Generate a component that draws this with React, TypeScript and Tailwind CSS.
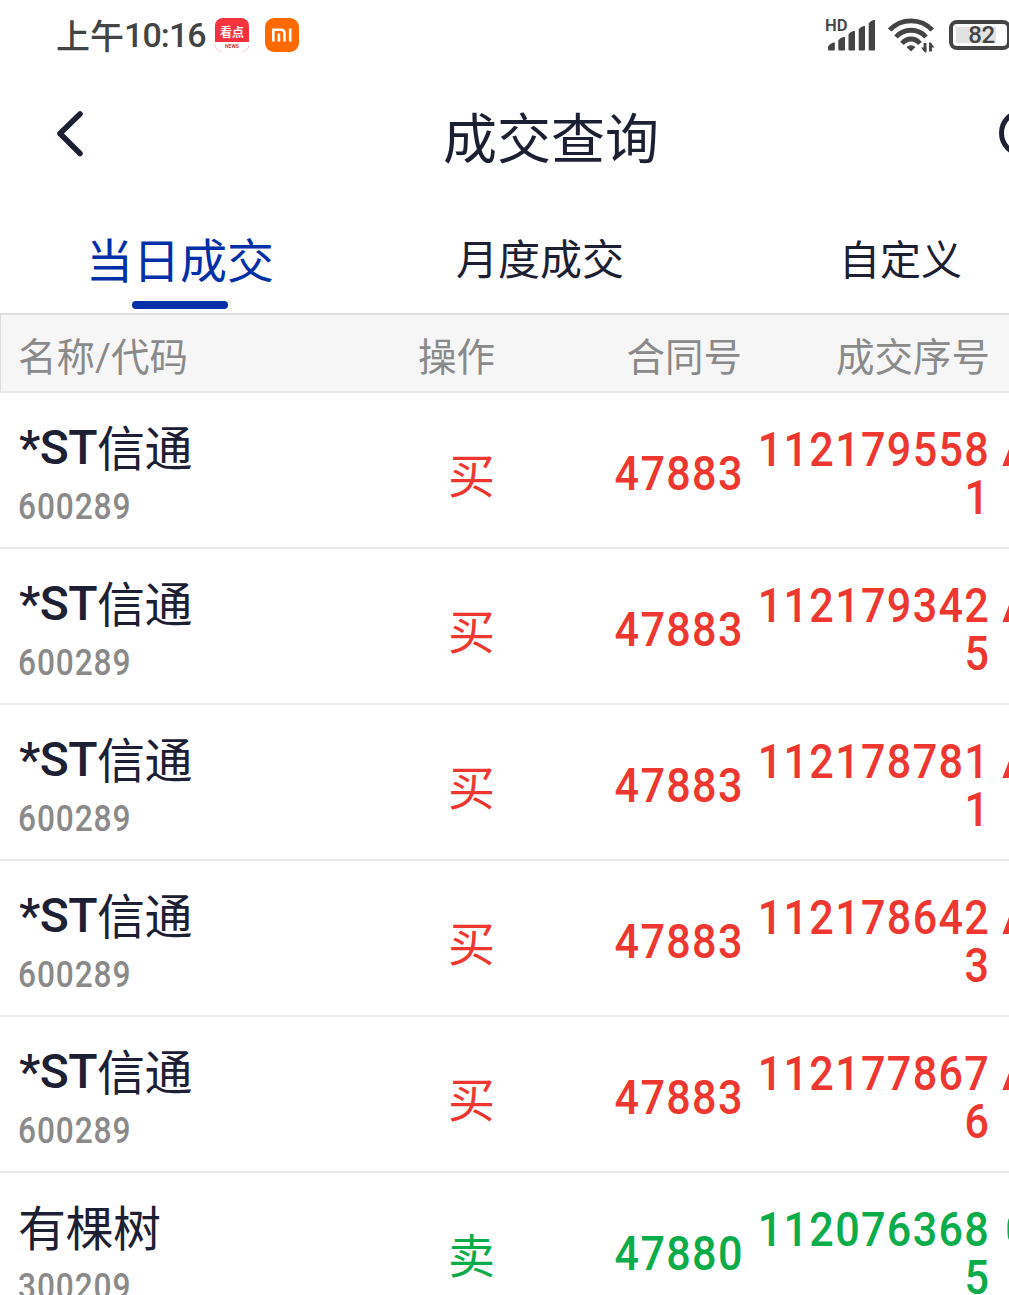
type Trade = {
  name: string;
  latin?: string;
  code: string;
  side: "买" | "卖";
  contract: string;
  serial: [string, string];
  account: string;
};

const trades: Trade[] = [
  { latin: "*ST", name: "信通", code: "600289", side: "买", contract: "47883", serial: ["112179558", "1"], account: "A" },
  { latin: "*ST", name: "信通", code: "600289", side: "买", contract: "47883", serial: ["112179342", "5"], account: "A" },
  { latin: "*ST", name: "信通", code: "600289", side: "买", contract: "47883", serial: ["112178781", "1"], account: "A" },
  { latin: "*ST", name: "信通", code: "600289", side: "买", contract: "47883", serial: ["112178642", "3"], account: "A" },
  { latin: "*ST", name: "信通", code: "600289", side: "买", contract: "47883", serial: ["112177867", "6"], account: "A" },
  { name: "有棵树", code: "300209", side: "卖", contract: "47880", serial: ["112076368", "5"], account: "0" },
];

const columns = "grid grid-cols-[495px_247px_247px_200px]";

// narrow, slightly spaced numerals
const digits = "-mr-[1.5px] block origin-right scale-x-[0.88] text-[49px] font-medium tracking-[1.5px]";

function SignalIcon() {
  return (
    <svg width="52" height="36" viewBox="0 0 52 36" fill="#444">
      <text x="0" y="13.5" fontFamily="Roboto, sans-serif" fontSize="16.5" fontWeight="600">
        HD
      </text>
      <path d="M3 32.500v-2.500q1-3 5.500-4.500h1.300v7q0 1-1 1H4q-1 0-1-1z" />
      <path d="M13.300 32.500v-9q1.500-3 5-3.500h1.700v12.500q0 1-1 1h-4.700q-1 0-1-1z" />
      <path d="M23.500 32.500v-15q1.500-3 5-3.500h1.500v18.500q0 1-1 1h-4.500q-1 0-1-1z" />
      <path d="M33.700 32.500v-20q1.500-3 5-3.500h1.300v23.500q0 1-1 1h-4.300q-1 0-1-1z" />
      <path d="M43.700 32.500v-26q1.500-3 5-3.500h1.300v29.500q0 1-1 1h-4.300q-1 0-1-1z" />
    </svg>
  );
}

function WifiIcon() {
  return (
    <svg width="48" height="36" viewBox="0 0 48 36" fill="none" stroke="#444" strokeWidth="4.800">
      <path d="M1.700 13C13 .7 33 .7 44.300 13" />
      <path d="M8 20C16 11 30 11 38 20" />
      <path d="M14 26.500C19 20.500 27 20.500 32 26.500" />
      <path d="M23 34.500l-4.500-4.500q4.500-3.500 9 0z" fill="#444" stroke="none" />
      <path d="M37 26v8M42.500 26.500v8" strokeWidth="2.800" />
      <path d="M38.400 35.500h-1.400l-4-5h5.400zM41.100 25.500h1.400l4 5h-5.400z" fill="#444" stroke="none" />
    </svg>
  );
}

function StatusBar() {
  return (
    <div className="flex h-[70px] items-center pl-14">
      <div className="flex w-[159px] shrink-0 items-center whitespace-nowrap font-medium text-[#444]">
        <span className="pt-1 text-[34px] leading-[70px]">上午</span>
        <span className="text-[34px] leading-[70px] tracking-[-0.9px]">10:16</span>
      </div>
      <div className="flex h-[34px] w-[34px] shrink-0 flex-col overflow-hidden rounded-[8px] bg-[#f5333f] text-center text-white shadow-[0_0_1px_#ddd]">
        <div className="h-6 text-[12px] font-bold leading-[30px]">看点</div>
        <div className="h-[10px] bg-white text-[5px] font-bold leading-[9px] text-[#d33]">NEWS</div>
      </div>
      <div className="ml-4 flex h-[34px] w-[34px] shrink-0 items-center justify-center rounded-[9px] bg-[#ff6a00]">
        <svg width="20" height="14" viewBox="0 0 20 14" fill="none" stroke="#fff" strokeWidth="2.600">
          <path d="M1.300 13.500V1.800H9q3.500 0 3.500 3.500v8.200M6.900 5.500v8M18.200.5v13" />
        </svg>
      </div>
      <div className="ml-[526px] flex shrink-0 items-center">
        <SignalIcon />
        <div className="ml-[11px]">
          <WifiIcon />
        </div>
        <div className="ml-[13px] h-[30px] w-[62px] shrink-0 rounded-[8px] border-4 border-[#444] p-[3px]">
          <div className="h-4 w-10 bg-[#e2e2e2] text-center text-[24px] font-medium leading-[17px] tracking-[-0.3px] text-[#444]">
            <span className="ml-[11px]">82</span>
          </div>
        </div>
      </div>
    </div>
  );
}

function TitleBar() {
  return (
    <div className="flex h-[130px] items-center">
      <svg className="ml-14 shrink-0" width="30" height="48" viewBox="0 0 30 48" fill="none" stroke="#1d2033" strokeWidth="5.500" strokeLinecap="round" strokeLinejoin="round">
        <path d="M24 3L4 22.500l20 20" />
      </svg>
      <h1 className="ml-[357px] w-[220px] shrink-0 whitespace-nowrap pt-3 text-[54px] leading-[80px]">成交查询</h1>
      <svg className="ml-[335px] shrink-0" width="60" height="52" viewBox="0 0 60 52" fill="none" stroke="#1d2033" strokeWidth="5">
        <circle cx="25" cy="24" r="21.500" />
        <path d="M40 40l12 11" />
      </svg>
    </div>
  );
}

function Tabs() {
  return (
    <div className="grid h-[113px] grid-cols-[360px_360px_360px] text-center">
      <div className="flex flex-col items-center text-[#0030a8]">
        <span className="h-[101px] text-[47px] leading-[123px]">当日成交</span>
        <span className="h-2 w-24 rounded-full bg-[#0030a8]" />
      </div>
      <span className="text-[42px] leading-[122px]">月度成交</span>
      <span className="pl-px text-[41px] leading-[122px]">自定义</span>
    </div>
  );
}

function TradeRow({ trade }: { trade: Trade }) {
  const color = trade.side === "买" ? "text-[#ee3730]" : "text-[#0dac4a]";
  return (
    <div className={`${columns} h-[156px] border-b-2 border-[#ececec]`}>
      <div className="flex justify-between">
        <div className="pl-[18px] pt-5">
          <div className="flex h-[68px] items-start text-[48px]">
            {trade.latin && <span className="pl-px font-medium leading-[70px] tracking-[-0.5px]">{trade.latin}</span>}
            <span className="leading-[73px] tracking-[-0.5px]">{trade.name}</span>
          </div>
          <div className="origin-left scale-x-[0.88] text-[36px] font-medium leading-[53px] tracking-[1px] text-[#8a8a8a]">
            {trade.code}
          </div>
        </div>
        <div className={`text-[47px] leading-[167px] ${color}`}>{trade.side}</div>
      </div>
      <div className={`flex justify-end leading-[162px] ${color}`}>
        <span className={digits}>{trade.contract}</span>
      </div>
      <div className={`flex flex-col items-end pt-[33px] leading-[48px] ${color}`}>
        <span className={digits}>{trade.serial[0]}</span>
        <span className={digits}>{trade.serial[1]}</span>
      </div>
      <div className={`pt-[33px] text-[49px] font-medium leading-[48px] ${trade.account === "0" ? "pl-4" : "pl-[13px]"} ${color}`}>
        {trade.account}
      </div>
    </div>
  );
}

export default function App() {
  return (
    <div className="h-[1295px] w-[1009px] overflow-hidden bg-white font-['Roboto','Noto_Sans_CJK_SC',sans-serif] text-[#1d2033]">
      <StatusBar />
      <TitleBar />
      <Tabs />
      <div className={`${columns} h-20 w-[1189px] border-y-2 border-l border-t-[#dedede] border-b-[#e9e9e9] border-l-[#dedede] bg-[#f6f6f6] text-[38.500px] leading-[85px] text-[#8a8a8a]`}>
        <div className="-ml-px flex justify-between pl-[18px]">
          <span>名称/代码</span>
          <span className="pr-px">操作</span>
        </div>
        <div className="pr-px text-right">合同号</div>
        <div className="text-right">成交序号</div>
      </div>
      {trades.map((trade) => (
        <TradeRow key={trade.serial.join("")} trade={trade} />
      ))}
    </div>
  );
}
